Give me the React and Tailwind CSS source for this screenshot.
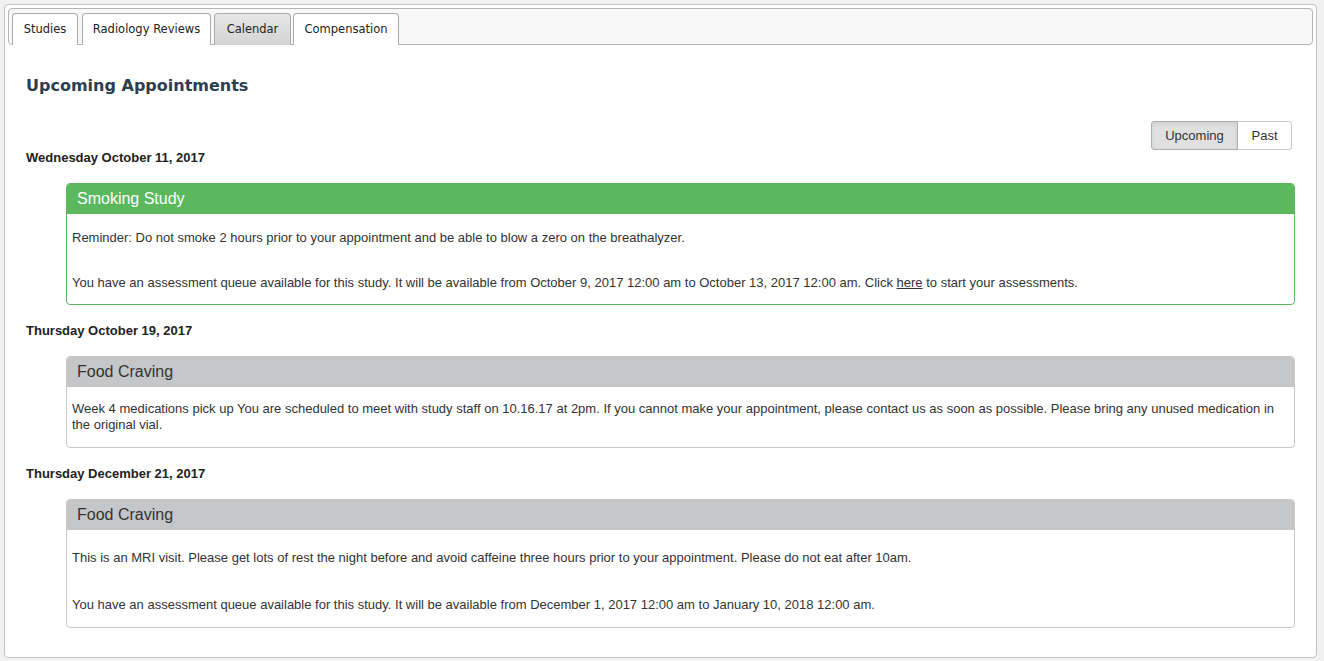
import React from "react";

const tabs = [
  { label: "Studies", w: "w-[66px]", ml: "ml-0" },
  { label: "Radiology Reviews", w: "w-[129px]", ml: "ml-[4px]" },
  { label: "Calendar", w: "w-[77px]", ml: "ml-[3px]", active: true },
  { label: "Compensation", w: "w-[106px]", ml: "ml-[2px]" },
];

function Card({ title, green, bodyClass, children }) {
  return (
    <div
      className={
        "ml-[40px] mt-[17px] rounded-[4px] border bg-white overflow-hidden " +
        (green ? "border-[#5cb85c]" : "border-[#c8c8c8]")
      }
    >
      <div
        className={
          "h-[30px] px-[10px] flex items-center text-[16px] leading-[20px] " +
          (green ? "bg-[#5cb85c] text-white" : "bg-[#c5c6c8] text-[#333]")
        }
      >
        {title}
      </div>
      <div className={"px-[5px] text-[13px] leading-[16px] text-[#333] " + bodyClass}>
        {children}
      </div>
    </div>
  );
}

function DateHead({ children, first }) {
  return (
    <div
      className={
        "text-[13px] leading-[16px] font-bold text-[#222] " + (first ? "" : "mt-[18px]")
      }
    >
      {children}
    </div>
  );
}

export default function App() {
  return (
    <div
      className="min-h-screen bg-[#f1f1f1] pt-[4px] pl-[4px] pr-[7px]"
      style={{ fontFamily: '"Liberation Sans", Arial, sans-serif' }}
    >
      <div className="h-[654px] rounded-[4px] border border-[#c2c2c2] bg-white p-[3px]">
        {/* tab bar */}
        <div className="h-[37px] rounded-[4px] border border-[#b4b4b4] bg-[#f8f8f8] px-[3px] flex items-end">
          {tabs.map((t) => (
            <div
              key={t.label}
              className={
                t.w +
                " " +
                t.ml +
                " h-[32px] mb-[-1px] rounded-t-[4px] border border-b-0 border-[#aaaaaa] flex items-center justify-center text-[#222] " +
                (t.active
                  ? "bg-gradient-to-b from-[#e6e6e6] to-[#d4d4d4]"
                  : "bg-white")
              }
              style={{ fontFamily: '"DejaVu Sans", Verdana, sans-serif', fontSize: "11.5px" }}
            >
              {t.label}
            </div>
          ))}
        </div>

        <div className="px-[18px]">
          <h1
            className="mt-[29px] text-[16px] leading-[24px] font-bold text-[#2b3e50]"
            style={{ fontFamily: '"DejaVu Sans", Verdana, sans-serif' }}
          >
            Upcoming Appointments
          </h1>

          <div className="mt-[23px] flex justify-end pr-[3px]">
            <div className="flex h-[29px] text-[13px] text-[#333]">
              <div className="w-[87px] flex items-center justify-center rounded-l-[3px] border border-[#adadad] bg-[#e0e0e0] shadow-[inset_0_2px_4px_rgba(0,0,0,0.08)]">
                Upcoming
              </div>
              <div className="w-[54px] flex items-center justify-center rounded-r-[3px] border border-l-0 border-[#cccccc] bg-white">
                Past
              </div>
            </div>
          </div>

          <DateHead first>Wednesday October 11, 2017</DateHead>
          <Card title="Smoking Study" green bodyClass="pt-[16px] pb-[13px]">
            <p>
              Reminder: Do not smoke 2 hours prior to your appointment and be able to blow a zero on
              the breathalyzer.
            </p>
            <p className="mt-[29px]">
              You have an assessment queue available for this study. It will be available from
              October 9, 2017 12:00 am to October 13, 2017 12:00 am. Click{" "}
              <span className="underline">here</span> to start your assessments.
            </p>
          </Card>

          <DateHead>Thursday October 19, 2017</DateHead>
          <Card title="Food Craving" bodyClass="pt-[14px] pb-[14px]">
            <p>
              Week 4 medications pick up You are scheduled to meet with study staff on 10.16.17 at
              2pm. If you cannot make your appointment, please contact us as soon as possible. Please
              bring any unused medication in the original vial.
            </p>
          </Card>

          <DateHead>Thursday December 21, 2017</DateHead>
          <Card title="Food Craving" bodyClass="pt-[20px] pb-[14px]">
            <p>
              This is an MRI visit. Please get lots of rest the night before and avoid caffeine three
              hours prior to your appointment. Please do not eat after 10am.
            </p>
            <p className="mt-[31px]">
              You have an assessment queue available for this study. It will be available from
              December 1, 2017 12:00 am to January 10, 2018 12:00 am.
            </p>
          </Card>
        </div>
      </div>
    </div>
  );
}
